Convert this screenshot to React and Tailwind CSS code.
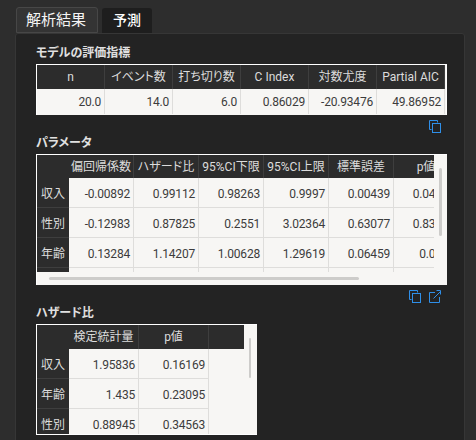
const CopyIcon = () => (
  <svg width="12" height="13" viewBox="0 0 12 13" fill="none" stroke="#2f8fe8" strokeWidth="1">
    <path d="M2.5 9.5h-2v-9h8v2" />
    <rect x="3.5" y="3.5" width="8" height="9" />
  </svg>
);

const ExternalIcon = () => (
  <svg width="12" height="13" viewBox="0 0 12 13" fill="none" stroke="#2f8fe8" strokeWidth="1">
    <path d="M6 2.5H.5v10h10V7" />
    <path d="M4.5 8.5L11 2M7.5 .5h4v4" />
  </svg>
);

const Title = ({ children }) => (
  <h2 className="h-[20px] pt-[1px] text-[12px] leading-[16px] font-bold text-[#e0e0e0]">{children}</h2>
);

const Head = ({ w, h, children, border = true }) => (
  <div
    className={`shrink-0 flex items-center justify-center bg-[#2c2c2c] text-[#dcdcdc] text-[12px] whitespace-nowrap ${border ? 'border-r border-[#3e3e3e]' : ''} ${w} ${h}`}
  >
    {children}
  </div>
);

const Cell = ({ w, h, children }) => (
  <div className={`shrink-0 flex items-center justify-end pt-[2px] pr-[3px] border-r border-b border-[#dedddb] text-[#3c3c3c] text-[12px] tracking-[-0.2px] whitespace-nowrap ${w} ${h}`}>
    {children}
  </div>
);

const Index = ({ children }) => (
  <div className="shrink-0 w-[32px] h-[30px] pt-[2px] flex items-center justify-center bg-[#2c2c2c] border-b border-[#3e3e3e] text-[#dcdcdc] text-[12px]">
    {children}
  </div>
);

const metrics = [
  ['n', '20.0'],
  ['イベント数', '14.0'],
  ['打ち切り数', '6.0'],
  ['C Index', '0.86029'],
  ['対数尤度', '-20.93476'],
  ['Partial AIC', '49.86952'],
];

const paramHead = ['偏回帰係数', 'ハザード比', '95%CI下限', '95%CI上限', '標準誤差', 'p値'];
const params = [
  ['収入', '-0.00892', '0.99112', '0.98263', '0.9997', '0.00439', '0.04211'],
  ['性別', '-0.12983', '0.87825', '0.2551', '3.02364', '0.63077', '0.83691'],
  ['年齢', '0.13284', '1.14207', '1.00628', '1.29619', '0.06459', '0.0397'],
  ['', '', '', '', '', '', ''],
];

const hazards = [
  ['収入', '1.95836', '0.16169'],
  ['年齢', '1.435', '0.23095'],
  ['性別', '0.88945', '0.34563'],
];

export default function App() {
  return (
    <div className="w-[476px] h-[440px] overflow-hidden bg-[#2d2d2d] font-['Roboto','Noto_Sans_CJK_JP',sans-serif] [font-feature-settings:'palt']">
      {/* tabs */}
      <div className="h-[33px] pl-[16px] pt-[7px] flex items-start gap-[4px]">
        <div className="w-[82px] h-[26px] pr-[2px] flex items-center justify-center bg-[#343434] border border-[#474747] rounded-t-[3px] text-[15px] text-[#f4f4f4]">解析結果</div>
        <div className="w-[50px] h-[25px] mt-[1px] flex items-center justify-center bg-[#1e1e1e] rounded-t-[3px] text-[14px] font-medium text-white">予測</div>
      </div>

      <div className="ml-[15px] w-[450px] h-[420px] pl-[20px] pt-[10px] bg-[#232323] border border-[#363636] rounded-[3px]">
        <Title>モデルの評価指標</Title>
        <div className="w-[411px] h-[51px] border-t border-l border-r border-b-0 border-white bg-[#f7f6f4]">
          <div className="flex">
            {metrics.map(([label]) => (
              <Head key={label} w="w-[68px]" h="h-[24px]">{label}</Head>
            ))}
          </div>
          <div className="flex">
            {metrics.map(([label, value]) => (
              <div key={label} className="w-[68px] h-[25px] shrink-0 flex items-center justify-end pt-[1px] pr-[3px] border-r border-[#dedddb] text-[#3c3c3c] text-[12px] tracking-[-0.2px]">{value}</div>
            ))}
          </div>
        </div>
        <div className="w-[411px] h-[19px] pt-[5px] pr-[6px] flex justify-end items-start">
          <CopyIcon />
        </div>

        <Title>パラメータ</Title>
        <div className="relative w-[411px] h-[131px] border-t border-l border-white bg-[#f7f6f4]">
          <div className="w-[397px] h-[117px] overflow-hidden">
            <div className="flex">
              <Head w="w-[32px]" h="h-[23px]" border={false} />
              {paramHead.map((label) => (
                <Head key={label} w="w-[65px]" h="h-[23px]">{label}</Head>
              ))}
            </div>
            {params.map((row, i) => (
              <div key={i} className="flex">
                <Index>{row[0]}</Index>
                {row.slice(1).map((value, j) => (
                  <Cell key={j} w="w-[65px]" h="h-[30px]">{value}</Cell>
                ))}
              </div>
            ))}
          </div>
          {/* scrollbars */}
          <div className="absolute left-[12px] top-[122px] w-[310px] h-[3px] rounded-full bg-[#cdccca]" />
          <div className="absolute left-[402px] top-[13px] w-[3px] h-[68px] rounded-full bg-[#cdccca]" />
        </div>
        <div className="w-[411px] h-[19px] pt-[5px] pr-[6px] flex justify-end items-start gap-[8px]">
          <CopyIcon />
          <ExternalIcon />
        </div>

        <Title>ハザード比</Title>
        <div className="relative w-[221px] h-[111px] overflow-hidden border border-white border-r-0 bg-[#f7f6f4]">
          <div className="flex">
            <Head w="w-[32px]" h="h-[24px]" border={false} />
            <Head w="w-[70px]" h="h-[24px]">検定統計量</Head>
            <Head w="w-[70px]" h="h-[24px]">p値</Head>
            <Head w="w-[35px]" h="h-[24px]" border={false} />
          </div>
          {hazards.map((row) => (
            <div key={row[0]} className="flex">
              <Index>{row[0]}</Index>
              <Cell w="w-[70px]" h="h-[30px]">{row[1]}</Cell>
              <Cell w="w-[70px]" h="h-[30px]">{row[2]}</Cell>
            </div>
          ))}
          <div className="absolute left-[212px] top-[13px] w-[2px] h-[40px] rounded-full bg-[#cdccca]" />
        </div>
      </div>
    </div>
  );
}
